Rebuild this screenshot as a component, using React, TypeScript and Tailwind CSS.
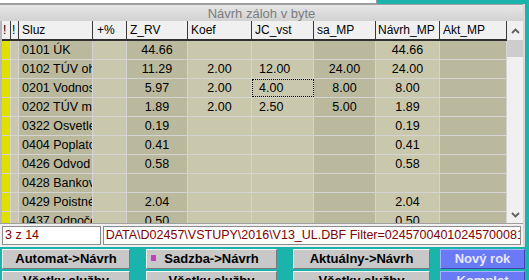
// Návrh záloh v byte — grid form with status line and action buttons

type Col = { key: string; cell: string; head: string; label: string }

const COLS: Col[] = [
  { key: 'f1', cell: 'w-[9px] bg-[#e0e000]', head: 'w-[9px] pl-[1px]', label: '!' },
  { key: 'f2', cell: 'w-[8px] bg-[#c9c8ad]', head: 'w-[8px] pl-[1px]', label: '!' },
  { key: 'sluz', cell: 'w-[74px] bg-[#bab99d] pl-[3px] text-left', head: 'w-[74px] pl-[3px]', label: 'Sluz' },
  { key: 'pct', cell: 'w-[34px] bg-[#c9c8ad] text-center', head: 'w-[34px] pl-[4px]', label: '+%' },
  { key: 'zrv', cell: 'w-[61px] bg-[#bab99d] text-center', head: 'w-[61px] pl-[3px]', label: 'Z_RV' },
  { key: 'koef', cell: 'w-[64px] bg-[#c9c8ad] text-center', head: 'w-[64px] pl-[3px]', label: 'Koef' },
  { key: 'jc', cell: 'w-[62px] bg-[#c9c8ad] pl-[7px] text-left', head: 'w-[62px] pl-[3px]', label: 'JC_vst' },
  { key: 'sa', cell: 'w-[62px] bg-[#bab99d] text-center', head: 'w-[62px] pl-[3px]', label: 'sa_MP' },
  { key: 'navrh', cell: 'w-[64px] bg-[#c9c8ad] text-center', head: 'w-[64px] pl-[2px]', label: 'Návrh_MP' },
  { key: 'akt', cell: 'w-[67px] bg-[#bab99d] text-center', head: 'w-[67px] pl-[3px]', label: 'Akt_MP' },
]

type Row = Record<string, string>

const ROWS: Row[] = [
  { sluz: '0101 ÚK', zrv: '44.66', navrh: '44.66' },
  { sluz: '0102 TÚV ohrev', zrv: '11.29', koef: '2.00', jc: '12.00', sa: '24.00', navrh: '24.00' },
  { sluz: '0201 Vodnosť', zrv: '5.97', koef: '2.00', jc: '4.00', sa: '8.00', navrh: '8.00' },
  { sluz: '0202 TÚV m3', zrv: '1.89', koef: '2.00', jc: '2.50', sa: '5.00', navrh: '1.89' },
  { sluz: '0322 Osvetlenie', zrv: '0.19', navrh: '0.19' },
  { sluz: '0404 Poplatok', zrv: '0.41', navrh: '0.41' },
  { sluz: '0426 Odvod do FO', zrv: '0.58', navrh: '0.58' },
  { sluz: '0428 Bankové poplatky' },
  { sluz: '0429 Poistné', zrv: '2.04', navrh: '2.04' },
  { sluz: '0437 Odpočet', zrv: '0.50', navrh: '0.50' },
]

function Chevron({ up }: { up?: boolean }) {
  return (
    <svg width="9" height="6" viewBox="0 0 9 6" className="block">
      <path
        d={up ? 'M1 5 L4.5 1.5 L8 5' : 'M1 1 L4.5 4.5 L8 1'}
        fill="none"
        stroke="#606060"
        strokeWidth="1.8"
      />
    </svg>
  )
}

function GrayButton({ label, mark }: { label: string; mark?: boolean }) {
  return (
    <div className="relative flex h-full w-full items-center justify-center border border-t-[#f4f4f4] border-l-[#f4f4f4] border-r-[#7a7a7a] border-b-[#7a7a7a] bg-[#c8c8c8] text-[13px] font-bold text-black">
      {mark && <span className="absolute left-[4px] top-[5px] h-[6px] w-[5px] bg-[#c040c0]" />}
      {label}
    </div>
  )
}

function BlueButton({ label }: { label: string }) {
  return (
    <div className="flex h-full w-full items-center justify-center border border-t-[#a8b2ff] border-l-[#a8b2ff] border-r-[#3c48b0] border-b-[#3c48b0] bg-[#6a7af6] text-[13px] font-bold text-[#e8e8ff]">
      {label}
    </div>
  )
}

export default function App() {
  return (
    <div
      className="h-[280px] w-[529px] overflow-hidden bg-[#1bb4ac] text-[12px] text-black"
      style={{ fontFamily: '"Liberation Sans", Arial, sans-serif' }}
    >
      {/* remnant of the panel above */}
      <div className="flex h-[4px]">
        <div className="w-[377px] border-b border-r border-[#9a9a9a] bg-white" />
      </div>

      <div className="w-[525px] border-r-2 border-[#d8d8d8] bg-[#f0f0f0]">
        {/* title */}
        <div className="flex h-[17px] items-center justify-center border-t border-[#a0a0a0] bg-gradient-to-b from-[#e6e6e6] to-[#d2d2d2] text-[13px] leading-none text-[#7c7c7c]">
          Návrh záloh v byte
        </div>

        {/* grid + scrollbar */}
        <div className="flex h-[202px]">
          <div className="w-[507px] border-l-2 border-[#b8b8b8] overflow-hidden">
            <div className="flex h-[20px] border-b-2 border-[#303030] bg-[#f0f0f0] text-[12px]">
              {COLS.map((c) => (
                <div
                  key={c.key}
                  className={`${c.head} shrink-0 overflow-hidden whitespace-nowrap border-r border-[#3a3a3a] leading-[18px]`}
                >
                  {c.label}
                </div>
              ))}
            </div>
            {ROWS.map((r, i) => (
              <div key={i} className="flex h-[19px] border-b border-[#d4d4d4] text-[12.5px]">
                {COLS.map((c) => {
                  const focused = i === 2 && c.key === 'jc'
                  return (
                    <div
                      key={c.key}
                      className={`${c.cell} shrink-0 overflow-hidden whitespace-nowrap border-r border-[#d4d4d4] leading-[18px] ${
                        focused ? 'outline outline-1 outline-dotted outline-black -outline-offset-1' : ''
                      }`}
                    >
                      {r[c.key] ?? ''}
                    </div>
                  )
                })}
              </div>
            ))}
          </div>
          {/* scrollbar */}
          <div className="flex w-[16px] flex-col items-center bg-[#f0f0f0]">
            <div className="flex h-[19px] items-center justify-center">
              <Chevron up />
            </div>
            <div className="h-[17px] w-[16px] bg-[#cdcdcd]" />
            <div className="flex-1" />
            <div className="flex h-[16px] items-center justify-center">
              <Chevron />
            </div>
          </div>
        </div>

        {/* status line */}
        <div className="flex h-[24px] items-center gap-[2px] border-t border-[#a0a0a0] px-[2px] pb-[1px] text-[12.5px]">
          <div className="h-[19px] w-[99px] overflow-hidden whitespace-nowrap border border-[#8c8c8c] bg-white pl-[2px] leading-[17px] text-[#800000]">
            3 z 14
          </div>
          <div className="h-[19px] w-[420px] overflow-hidden whitespace-nowrap border border-[#8c8c8c] bg-white pl-[2px] leading-[17px] text-[#800000]">
            DATA\D02457\VSTUPY\2016\V13_UL.DBF Filter=024570040102457000810001
          </div>
        </div>
      </div>

      {/* buttons */}
      <div className="flex flex-col gap-[2px] pl-[2px] pt-[2px]">
        <div className="flex h-[20px]">
          <div className="w-[128px]"><GrayButton label="Automat->Návrh" /></div>
          <div className="ml-[16px] w-[131px]"><GrayButton label="Sadzba->Návrh" mark /></div>
          <div className="ml-[16px] w-[137px]"><GrayButton label="Aktuálny->Návrh" /></div>
          <div className="ml-[10px] w-[85px]"><BlueButton label="Nový rok" /></div>
        </div>
        <div className="flex h-[20px]">
          <div className="w-[128px]"><GrayButton label="Všetky služby" /></div>
          <div className="ml-[16px] w-[131px]"><GrayButton label="Všetky služby" /></div>
          <div className="ml-[16px] w-[137px]"><GrayButton label="Všetky služby" /></div>
          <div className="ml-[10px] w-[85px]"><BlueButton label="Komplet" /></div>
        </div>
      </div>
    </div>
  )
}
